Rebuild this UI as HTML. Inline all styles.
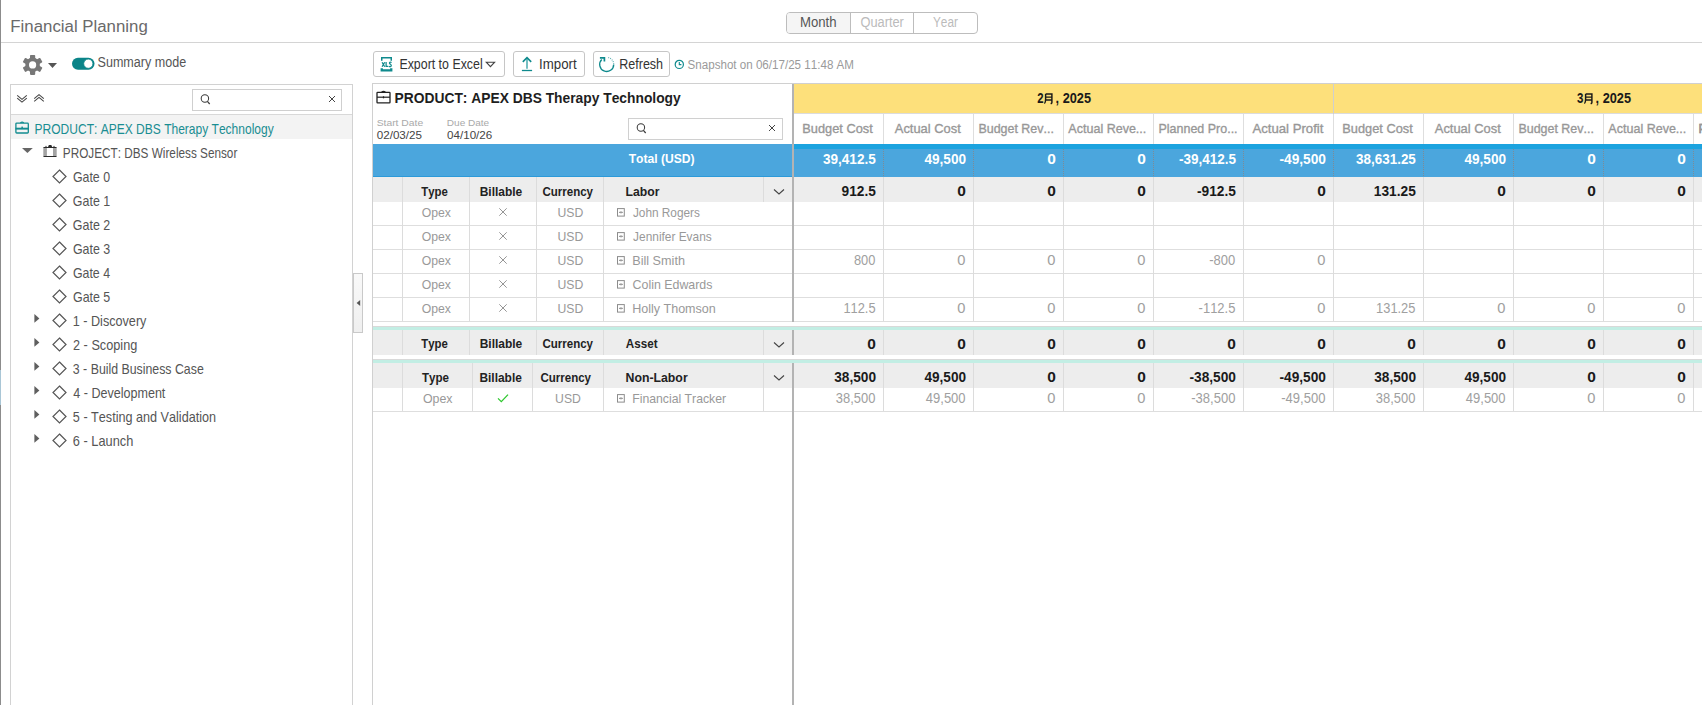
<!DOCTYPE html><html><head><meta charset="utf-8"><style>
*{box-sizing:border-box;margin:0;padding:0}
html,body{width:1702px;height:705px;overflow:hidden;background:#fff}
body{position:relative;font-family:"Liberation Sans",sans-serif;font-kerning:none}
.a{position:absolute}
.t{position:absolute;white-space:nowrap;line-height:20px;height:20px;transform-origin:0 50%}
</style></head><body>

<div class="a" style="left:0px;top:0px;width:1px;height:705px;background:#8c8c8c"></div>
<div class="a" style="left:0px;top:370px;width:1px;height:35px;background:#a9c6d6"></div>
<div class="t" style="left:10px;top:16px;font-size:16px;color:#6a6a6a;transform:translate(0.329px,0.884px) scaleX(1.0512);">Financial Planning</div>
<div class="a" style="left:1px;top:42px;width:1701px;height:1px;background:#d4d4d4"></div>
<div class="a" style="left:786px;top:12px;width:192px;height:22px;border:1px solid #bdbdbd;border-radius:4px;background:#fff"></div>
<div class="a" style="left:787px;top:13px;width:63px;height:20px;background:#f5f5f5;border-radius:3px 0 0 3px"></div>
<div class="a" style="left:850px;top:13px;width:1px;height:20px;background:#bdbdbd"></div>
<div class="a" style="left:913px;top:13px;width:1px;height:20px;background:#bdbdbd"></div>
<div class="t" style="left:800px;top:12px;font-size:14px;color:#555;transform:translate(0.016px,0.361px) scaleX(0.9402);">Month</div>
<div class="t" style="left:860px;top:12px;font-size:14px;color:#bbb;transform:translate(0.418px,0.361px) scaleX(0.9148);">Quarter</div>
<div class="t" style="left:932px;top:12px;font-size:14px;color:#bbb;transform:translate(0.942px,0.361px) scaleX(0.8431);">Year</div>
<svg class="a" style="left:22px;top:54px" width="22" height="22" viewBox="0 0 22 22"><g transform="translate(10.6,10.9)" fill="#777"><rect x="-2.6" y="-10" width="5.2" height="5" rx="0.8" transform="rotate(0)"/><rect x="-2.6" y="-10" width="5.2" height="5" rx="0.8" transform="rotate(60)"/><rect x="-2.6" y="-10" width="5.2" height="5" rx="0.8" transform="rotate(120)"/><rect x="-2.6" y="-10" width="5.2" height="5" rx="0.8" transform="rotate(180)"/><rect x="-2.6" y="-10" width="5.2" height="5" rx="0.8" transform="rotate(240)"/><rect x="-2.6" y="-10" width="5.2" height="5" rx="0.8" transform="rotate(300)"/><circle r="7.3"/></g><circle cx="10.6" cy="10.9" r="3.6" fill="#fff"/></svg>
<svg class="a" style="left:47px;top:62px" width="11" height="7" viewBox="0 0 11 7"><path d="M1 1 L10 1 L5.5 6 Z" fill="#555"/></svg>
<svg class="a" style="left:71px;top:57px" width="25" height="14" viewBox="0 0 25 14"><rect x="1" y="0.7" width="22.5" height="12" rx="6" fill="#0a8488"/><circle cx="17.3" cy="6.7" r="4.6" fill="#fff" stroke="#0a8488" stroke-width="0.8"/></svg>
<div class="t" style="left:97px;top:52px;font-size:14px;color:#555;transform:translate(0.519px,0.461px) scaleX(0.8972);">Summary mode</div>
<div class="a" style="left:10px;top:84px;width:343px;height:640px;border:1px solid #d2d2d2;background:#fff"></div>
<div class="a" style="left:11px;top:114px;width:341px;height:1px;background:#d8d8d8"></div>
<svg class="a" style="left:15px;top:92px" width="14" height="12" viewBox="0 0 14 12"><path d="M2.2 3.3 L7 7.4 L11.8 3.3 M2.2 6.1 L7 10.1 L11.8 6.1" fill="none" stroke="#444" stroke-width="1.05"/></svg>
<svg class="a" style="left:32px;top:92px" width="14" height="12" viewBox="0 0 14 12"><path d="M2.2 6.6 L7 2.6 L11.8 6.6 M2.2 9.4 L7 5.4 L11.8 9.4" fill="none" stroke="#444" stroke-width="1.05"/></svg>
<div class="a" style="left:192px;top:89px;width:150px;height:22px;border:1px solid #cfcfcf;background:#fff"></div>
<svg class="a" style="left:199px;top:93px" width="14" height="14" viewBox="0 0 14 14"><circle cx="5.9" cy="5.5" r="3.7" fill="none" stroke="#3a3a3a" stroke-width="1.05"/><path d="M8.4 8.3 L10.7 11" stroke="#3a3a3a" stroke-width="1.2"/></svg>
<svg class="a" style="left:327px;top:94px" width="10" height="10" viewBox="0 0 10 10"><path d="M2 2 L8 8 M8 2 L2 8" stroke="#3a3a3a" stroke-width="0.95"/></svg>
<div class="a" style="left:11px;top:115px;width:341px;height:24px;background:#f3f3f3"></div>
<svg class="a" style="left:14px;top:121px" width="16" height="13" viewBox="0 0 16 13"><rect x="1.9" y="2.1" width="12.4" height="9.9" rx="0.8" fill="none" stroke="#138c90" stroke-width="1.3"/><rect x="1.5" y="6.7" width="13.2" height="1.9" fill="#138c90"/><path d="M6.4 1.9 Q8.1 0.3 9.8 1.9" stroke="#138c90" stroke-width="1.3" fill="none"/><rect x="7.4" y="5.6" width="1.5" height="1.4" fill="#138c90"/></svg>
<div class="t" style="left:34px;top:118px;font-size:14.5px;color:#1a8d92;transform:translate(0.558px,0.967px) scaleX(0.8290);">PRODUCT: APEX DBS Therapy Technology</div>
<svg class="a" style="left:21px;top:147px" width="13" height="7" viewBox="0 0 13 7"><path d="M1 1 L11.8 1 L6.4 6 Z" fill="#666"/></svg>
<svg class="a" style="left:42px;top:144px" width="16" height="14" viewBox="0 0 16 14"><rect x="1.3" y="3.4" width="3.6" height="8.9" fill="#a3a3a3"/><rect x="11" y="3.4" width="3.7" height="8.9" fill="#a3a3a3"/><rect x="1.4" y="2.9" width="13.2" height="1.1" rx="0.5" fill="#2a2a2a"/><rect x="1.4" y="11.9" width="13.2" height="1.1" rx="0.5" fill="#2a2a2a"/><path d="M6 3 L6.9 1.1 H9.3 L10.2 3 Z" fill="#2a2a2a"/><rect x="3.1" y="1.9" width="1.8" height="1.1" fill="#8a8a8a"/><rect x="11.1" y="1.9" width="1.8" height="1.1" fill="#8a8a8a"/></svg>
<div class="t" style="left:62px;top:142px;font-size:14.5px;color:#555;transform:translate(0.867px,0.967px) scaleX(0.8109);">PROJECT: DBS Wireless Sensor</div>
<svg class="a" style="left:52px;top:169px" width="16" height="15" viewBox="0 0 16 15"><path d="M7.5 1 L14 7.5 L7.5 14 L1 7.5 Z" fill="none" stroke="#555" stroke-width="1.2"/></svg>
<div class="t" style="left:72px;top:166px;font-size:14.5px;color:#555;transform:translate(0.919px,0.867px) scaleX(0.8529);">Gate 0</div>
<svg class="a" style="left:52px;top:193px" width="16" height="15" viewBox="0 0 16 15"><path d="M7.5 1 L14 7.5 L7.5 14 L1 7.5 Z" fill="none" stroke="#555" stroke-width="1.2"/></svg>
<div class="t" style="left:72px;top:190px;font-size:14.5px;color:#555;transform:translate(0.857px,0.867px) scaleX(0.8567);">Gate 1</div>
<svg class="a" style="left:52px;top:217px" width="16" height="15" viewBox="0 0 16 15"><path d="M7.5 1 L14 7.5 L7.5 14 L1 7.5 Z" fill="none" stroke="#555" stroke-width="1.2"/></svg>
<div class="t" style="left:72px;top:214px;font-size:14.5px;color:#555;transform:translate(0.861px,0.867px) scaleX(0.8597);">Gate 2</div>
<svg class="a" style="left:52px;top:241px" width="16" height="15" viewBox="0 0 16 15"><path d="M7.5 1 L14 7.5 L7.5 14 L1 7.5 Z" fill="none" stroke="#555" stroke-width="1.2"/></svg>
<div class="t" style="left:72px;top:238px;font-size:14.5px;color:#555;transform:translate(0.878px,0.867px) scaleX(0.8569);">Gate 3</div>
<svg class="a" style="left:52px;top:265px" width="16" height="15" viewBox="0 0 16 15"><path d="M7.5 1 L14 7.5 L7.5 14 L1 7.5 Z" fill="none" stroke="#555" stroke-width="1.2"/></svg>
<div class="t" style="left:72px;top:262px;font-size:14.5px;color:#555;transform:translate(0.913px,0.867px) scaleX(0.8527);">Gate 4</div>
<svg class="a" style="left:52px;top:289px" width="16" height="15" viewBox="0 0 16 15"><path d="M7.5 1 L14 7.5 L7.5 14 L1 7.5 Z" fill="none" stroke="#555" stroke-width="1.2"/></svg>
<div class="t" style="left:73px;top:286px;font-size:14.5px;color:#555;transform:translate(0.011px,0.867px) scaleX(0.8560);">Gate 5</div>
<svg class="a" style="left:52px;top:313px" width="16" height="15" viewBox="0 0 16 15"><path d="M7.5 1 L14 7.5 L7.5 14 L1 7.5 Z" fill="none" stroke="#555" stroke-width="1.2"/></svg>
<div class="t" style="left:72px;top:310px;font-size:14.5px;color:#555;transform:translate(0.695px,0.867px) scaleX(0.8714);">1 - Discovery</div>
<svg class="a" style="left:33px;top:313px" width="8" height="12" viewBox="0 0 8 12"><path d="M1.4 1 L6.4 5.4 L1.4 9.8 Z" fill="#5f5f5f"/></svg>
<svg class="a" style="left:52px;top:337px" width="16" height="15" viewBox="0 0 16 15"><path d="M7.5 1 L14 7.5 L7.5 14 L1 7.5 Z" fill="none" stroke="#555" stroke-width="1.2"/></svg>
<div class="t" style="left:73px;top:334px;font-size:14.5px;color:#555;transform:translate(0.029px,0.867px) scaleX(0.8760);">2 - Scoping</div>
<svg class="a" style="left:33px;top:337px" width="8" height="12" viewBox="0 0 8 12"><path d="M1.4 1 L6.4 5.4 L1.4 9.8 Z" fill="#5f5f5f"/></svg>
<svg class="a" style="left:52px;top:361px" width="16" height="15" viewBox="0 0 16 15"><path d="M7.5 1 L14 7.5 L7.5 14 L1 7.5 Z" fill="none" stroke="#555" stroke-width="1.2"/></svg>
<div class="t" style="left:72px;top:358px;font-size:14.5px;color:#555;transform:translate(0.842px,0.867px) scaleX(0.8503);">3 - Build Business Case</div>
<svg class="a" style="left:33px;top:361px" width="8" height="12" viewBox="0 0 8 12"><path d="M1.4 1 L6.4 5.4 L1.4 9.8 Z" fill="#5f5f5f"/></svg>
<svg class="a" style="left:52px;top:385px" width="16" height="15" viewBox="0 0 16 15"><path d="M7.5 1 L14 7.5 L7.5 14 L1 7.5 Z" fill="none" stroke="#555" stroke-width="1.2"/></svg>
<div class="t" style="left:73px;top:382px;font-size:14.5px;color:#555;transform:translate(0.268px,0.867px) scaleX(0.8656);">4 - Development</div>
<svg class="a" style="left:33px;top:385px" width="8" height="12" viewBox="0 0 8 12"><path d="M1.4 1 L6.4 5.4 L1.4 9.8 Z" fill="#5f5f5f"/></svg>
<svg class="a" style="left:52px;top:409px" width="16" height="15" viewBox="0 0 16 15"><path d="M7.5 1 L14 7.5 L7.5 14 L1 7.5 Z" fill="none" stroke="#555" stroke-width="1.2"/></svg>
<div class="t" style="left:72px;top:406px;font-size:14.5px;color:#555;transform:translate(0.853px,0.867px) scaleX(0.8708);">5 - Testing and Validation</div>
<svg class="a" style="left:33px;top:409px" width="8" height="12" viewBox="0 0 8 12"><path d="M1.4 1 L6.4 5.4 L1.4 9.8 Z" fill="#5f5f5f"/></svg>
<svg class="a" style="left:52px;top:433px" width="16" height="15" viewBox="0 0 16 15"><path d="M7.5 1 L14 7.5 L7.5 14 L1 7.5 Z" fill="none" stroke="#555" stroke-width="1.2"/></svg>
<div class="t" style="left:72px;top:430px;font-size:14.5px;color:#555;transform:translate(0.868px,0.867px) scaleX(0.8822);">6 - Launch</div>
<svg class="a" style="left:33px;top:433px" width="8" height="12" viewBox="0 0 8 12"><path d="M1.4 1 L6.4 5.4 L1.4 9.8 Z" fill="#5f5f5f"/></svg>
<div class="a" style="left:353px;top:273px;width:10px;height:60px;border:1px solid #c9c9c9;background:linear-gradient(#f9f9f9,#efefef)"></div>
<svg class="a" style="left:355px;top:299px" width="7" height="9" viewBox="0 0 7 9"><path d="M5.2 1 L1.6 4 L5.2 7 Z" fill="#555"/></svg>
<div class="a" style="left:373px;top:51px;width:132px;height:26px;border:1px solid #c6c6c6;border-radius:3px;background:#fff"></div>
<div class="a" style="left:513px;top:51px;width:72px;height:26px;border:1px solid #c6c6c6;border-radius:3px;background:#fff"></div>
<div class="a" style="left:593px;top:51px;width:77px;height:26px;border:1px solid #c6c6c6;border-radius:3px;background:#fff"></div>
<svg class="a" style="left:380px;top:56px" width="14" height="17" viewBox="0 0 14 17"><path d="M1.75 4.7 V1.85 H11.25 V4.7" fill="none" stroke="#0f8a8d" stroke-width="1.5"/><path d="M1.75 12.2 V14.45 H11.25 V12.2" fill="none" stroke="#0f8a8d" stroke-width="2.3"/><path d="M2.1 6.2 L4.7 10.7 M4.7 6.2 L2.1 10.7 M6.1 6 V10.4 H8.3 M11.5 6.7 Q10.8 5.9 9.9 6.3 Q9.1 6.9 9.8 7.8 L10.9 8.6 Q11.7 9.6 10.9 10.4 Q9.9 11 9 10.3" fill="none" stroke="#0f8a8d" stroke-width="1.25"/></svg>
<div class="t" style="left:399px;top:54px;font-size:14px;color:#333;transform:translate(0.423px,0.161px) scaleX(0.8838);">Export to Excel</div>
<svg class="a" style="left:485px;top:61px" width="11" height="7" viewBox="0 0 11 7"><path d="M1.3 1.2 L9.6 1.2 L5.45 5.6 Z" fill="none" stroke="#444" stroke-width="1.1"/></svg>
<svg class="a" style="left:520px;top:56px" width="14" height="16" viewBox="0 0 14 16"><path d="M7 2.2 V12.7" stroke="#6dbcbf" stroke-width="1.9"/><path d="M2.8 5.9 L7 1.6 L11.2 5.9" fill="none" stroke="#0f8a8d" stroke-width="1.6"/><path d="M1.9 14.5 H12.1" stroke="#0f8a8d" stroke-width="1.3"/></svg>
<div class="t" style="left:539px;top:54px;font-size:14px;color:#333;transform:translate(0.120px,0.161px) scaleX(0.9477);">Import</div>
<svg class="a" style="left:597px;top:55px" width="20" height="19" viewBox="0 0 20 19"><path d="M4.75 4.45 A7 7 0 1 0 16.7 9.4" fill="none" stroke="#0f8a8d" stroke-width="1.35"/><path d="M16.7 9.1 A7 7 0 0 0 10.3 2.4" fill="none" stroke="#0f8a8d" stroke-width="1.2" stroke-dasharray="0.9 1.1" opacity="0.7"/><path d="M2.9 2.9 H7.4 V6.6" fill="none" stroke="#0f8a8d" stroke-width="1.7"/></svg>
<div class="t" style="left:619px;top:54px;font-size:14px;color:#333;transform:translate(0.224px,0.161px) scaleX(0.8948);">Refresh</div>
<svg class="a" style="left:673px;top:59px" width="12" height="11" viewBox="0 0 12 11"><circle cx="6.3" cy="5.4" r="4.1" fill="none" stroke="#0f8a8d" stroke-width="1.2"/><path d="M6.3 3.1 V5.6 H8.4" fill="none" stroke="#0f8a8d" stroke-width="1.1"/></svg>
<div class="t" style="left:687px;top:55px;font-size:12px;color:#9a9a9a;transform:translate(0.537px,0.138px) scaleX(0.9668);">Snapshot on 06/17/25 11:48 AM</div>
<div class="a" style="left:372px;top:83px;width:1330px;height:640px;border-top:1px solid #d0d0d0;border-left:1px solid #d0d0d0;background:#fff"></div>
<svg class="a" style="left:375px;top:90px" width="17" height="14" viewBox="0 0 17 14"><rect x="2" y="2.4" width="13" height="10.4" rx="0.6" fill="none" stroke="#222" stroke-width="1.3"/><path d="M2 7.2 H15" stroke="#222" stroke-width="1.2"/><path d="M6.6 2.2 Q8.5 0.4 10.4 2.2" fill="none" stroke="#222" stroke-width="1.2"/><rect x="7.9" y="6.3" width="1.2" height="2" fill="#222"/></svg>
<div class="t" style="left:394px;top:88px;font-size:14px;font-weight:bold;color:#1e1e1e;transform:translate(0.551px,0.361px) scaleX(0.9862);">PRODUCT: APEX DBS Therapy Technology</div>
<div class="t" style="left:376px;top:112px;font-size:9px;color:#aaa;transform:translate(0.691px,0.603px) scaleX(1.1471);">Start Date</div>
<div class="t" style="left:446px;top:112px;font-size:9px;color:#aaa;transform:translate(0.806px,0.603px) scaleX(1.1148);">Due Date</div>
<div class="t" style="left:376px;top:125px;font-size:11px;color:#444;transform:translate(0.709px,0.126px) scaleX(1.0574);">02/03/25</div>
<div class="t" style="left:447px;top:125px;font-size:11px;color:#444;transform:translate(0.045px,0.126px) scaleX(1.0548);">04/10/26</div>
<div class="a" style="left:628px;top:118px;width:155px;height:22px;border:1px solid #d0d0d0;background:#fff"></div>
<svg class="a" style="left:635px;top:122px" width="14" height="14" viewBox="0 0 14 14"><circle cx="5.9" cy="5.5" r="3.7" fill="none" stroke="#3a3a3a" stroke-width="1.05"/><path d="M8.4 8.3 L10.7 11" stroke="#3a3a3a" stroke-width="1.2"/></svg>
<svg class="a" style="left:767px;top:123px" width="10" height="10" viewBox="0 0 10 10"><path d="M2 2 L8 8 M8 2 L2 8" stroke="#3a3a3a" stroke-width="0.95"/></svg>
<div class="a" style="left:794px;top:84px;width:908px;height:29px;background:#fde07b"></div>
<div class="a" style="left:794px;top:113px;width:908px;height:1px;background:#dcdcdc"></div>
<div class="a" style="left:1333px;top:84px;width:1px;height:60px;background:#cfcfcf"></div>
<div class="t" style="left:1037px;top:88px;font-size:14px;font-weight:bold;color:#1a1a1a;transform:translate(0.180px,0.161px) scaleX(0.8106);">2</div>
<svg class="a" style="left:1044px;top:93px" width="10" height="12" viewBox="0 0 10 12"><path d="M1.6 1 V6.2 Q1.6 9.4 0.4 10.6 M1.6 1 H7.9 V9.6 Q7.9 10.6 6.6 10.4 M1.6 4.1 H7.9 M1.6 6.9 H7.9" fill="none" stroke="#1a1a1a" stroke-width="1.45"/></svg>
<div class="t" style="left:1055px;top:88px;font-size:14px;font-weight:bold;color:#1a1a1a;transform:translate(0.614px,0.161px) scaleX(0.9088);">, 2025</div>
<div class="t" style="left:1577px;top:88px;font-size:14px;font-weight:bold;color:#1a1a1a;transform:translate(0.088px,0.161px) scaleX(0.8223);">3</div>
<svg class="a" style="left:1584px;top:93px" width="10" height="12" viewBox="0 0 10 12"><path d="M1.6 1 V6.2 Q1.6 9.4 0.4 10.6 M1.6 1 H7.9 V9.6 Q7.9 10.6 6.6 10.4 M1.6 4.1 H7.9 M1.6 6.9 H7.9" fill="none" stroke="#1a1a1a" stroke-width="1.45"/></svg>
<div class="t" style="left:1595px;top:88px;font-size:14px;font-weight:bold;color:#1a1a1a;transform:translate(0.614px,0.161px) scaleX(0.9088);">, 2025</div>
<div class="a" style="left:883px;top:114px;width:1px;height:30px;background:#dedede"></div>
<div class="a" style="left:973px;top:114px;width:1px;height:30px;background:#dedede"></div>
<div class="a" style="left:1063px;top:114px;width:1px;height:30px;background:#dedede"></div>
<div class="a" style="left:1153px;top:114px;width:1px;height:30px;background:#dedede"></div>
<div class="a" style="left:1243px;top:114px;width:1px;height:30px;background:#dedede"></div>
<div class="a" style="left:1333px;top:114px;width:1px;height:30px;background:#dedede"></div>
<div class="a" style="left:1423px;top:114px;width:1px;height:30px;background:#dedede"></div>
<div class="a" style="left:1513px;top:114px;width:1px;height:30px;background:#dedede"></div>
<div class="a" style="left:1603px;top:114px;width:1px;height:30px;background:#dedede"></div>
<div class="a" style="left:1693px;top:114px;width:1px;height:30px;background:#dedede"></div>
<div class="t" style="left:802px;top:119px;font-size:13.5px;color:#979797;transform:translate(0.319px,0.255px) scaleX(0.9475);-webkit-text-stroke:0.35px #979797;">Budget Cost</div>
<div class="t" style="left:894px;top:119px;font-size:13.5px;color:#979797;transform:translate(0.832px,0.255px) scaleX(0.9543);-webkit-text-stroke:0.35px #979797;">Actual Cost</div>
<div class="t" style="left:978px;top:119px;font-size:13.5px;color:#979797;transform:translate(0.412px,0.255px) scaleX(0.9223);-webkit-text-stroke:0.35px #979797;">Budget Rev...</div>
<div class="t" style="left:1068px;top:119px;font-size:13.5px;color:#979797;transform:translate(0.367px,0.255px) scaleX(0.9272);-webkit-text-stroke:0.35px #979797;">Actual Reve...</div>
<div class="t" style="left:1158px;top:119px;font-size:13.5px;color:#979797;transform:translate(0.528px,0.255px) scaleX(0.9239);-webkit-text-stroke:0.35px #979797;">Planned Pro...</div>
<div class="t" style="left:1252px;top:119px;font-size:13.5px;color:#979797;transform:translate(0.412px,0.255px) scaleX(0.9753);-webkit-text-stroke:0.35px #979797;">Actual Profit</div>
<div class="t" style="left:1342px;top:119px;font-size:13.5px;color:#979797;transform:translate(0.319px,0.255px) scaleX(0.9475);-webkit-text-stroke:0.35px #979797;">Budget Cost</div>
<div class="t" style="left:1434px;top:119px;font-size:13.5px;color:#979797;transform:translate(0.832px,0.255px) scaleX(0.9543);-webkit-text-stroke:0.35px #979797;">Actual Cost</div>
<div class="t" style="left:1518px;top:119px;font-size:13.5px;color:#979797;transform:translate(0.412px,0.255px) scaleX(0.9223);-webkit-text-stroke:0.35px #979797;">Budget Rev...</div>
<div class="t" style="left:1608px;top:119px;font-size:13.5px;color:#979797;transform:translate(0.367px,0.255px) scaleX(0.9272);-webkit-text-stroke:0.35px #979797;">Actual Reve...</div>
<div class="t" style="left:1698px;top:119px;font-size:13.5px;color:#979797;transform:translate(0.528px,0.255px) scaleX(0.9239);-webkit-text-stroke:0.35px #979797;">Planned Pro...</div>
<div class="t" style="left:1698px;top:119px;font-size:13.5px;color:#979797;transform:translate(0.528px,0.255px) scaleX(0.9239);-webkit-text-stroke:0.35px #979797;">Planned Pro...</div>
<div class="a" style="left:1693px;top:114px;width:1px;height:30px;background:#dedede"></div>
<div class="a" style="left:373px;top:144px;width:419px;height:33px;background:#4ba6dd"></div>
<div class="a" style="left:373px;top:176px;width:419px;height:1px;background:#2c9ad9"></div>
<div class="a" style="left:794px;top:144px;width:908px;height:33px;background:#4ba6dd"></div>
<div class="a" style="left:794px;top:144px;width:908px;height:5px;background:#1ca3df"></div>
<div class="a" style="left:883px;top:149px;width:1px;height:28px;background:repeating-linear-gradient(#808a92 0 1px,transparent 1px 2px)"></div>
<div class="a" style="left:973px;top:149px;width:1px;height:28px;background:repeating-linear-gradient(#808a92 0 1px,transparent 1px 2px)"></div>
<div class="a" style="left:1063px;top:149px;width:1px;height:28px;background:repeating-linear-gradient(#808a92 0 1px,transparent 1px 2px)"></div>
<div class="a" style="left:1153px;top:149px;width:1px;height:28px;background:repeating-linear-gradient(#808a92 0 1px,transparent 1px 2px)"></div>
<div class="a" style="left:1243px;top:149px;width:1px;height:28px;background:repeating-linear-gradient(#808a92 0 1px,transparent 1px 2px)"></div>
<div class="a" style="left:1333px;top:149px;width:1px;height:28px;background:repeating-linear-gradient(#808a92 0 1px,transparent 1px 2px)"></div>
<div class="a" style="left:1423px;top:149px;width:1px;height:28px;background:repeating-linear-gradient(#808a92 0 1px,transparent 1px 2px)"></div>
<div class="a" style="left:1513px;top:149px;width:1px;height:28px;background:repeating-linear-gradient(#808a92 0 1px,transparent 1px 2px)"></div>
<div class="a" style="left:1603px;top:149px;width:1px;height:28px;background:repeating-linear-gradient(#808a92 0 1px,transparent 1px 2px)"></div>
<div class="a" style="left:1693px;top:149px;width:1px;height:28px;background:repeating-linear-gradient(#808a92 0 1px,transparent 1px 2px)"></div>
<div class="t" style="left:628px;top:148px;font-size:13px;font-weight:bold;color:#fff;transform:translate(0.708px,0.549px) scaleX(0.9312);">Total (USD)</div>
<div class="t" style="left:822px;top:149px;font-size:14px;font-weight:bold;color:#fff;transform:translate(0.913px,0.161px) scaleX(0.9702);">39,412.5</div>
<div class="t" style="left:924px;top:149px;font-size:14px;font-weight:bold;color:#fff;transform:translate(0.474px,0.161px) scaleX(0.9704);">49,500</div>
<div class="t" style="left:1047px;top:149px;font-size:14px;font-weight:bold;color:#fff;transform:translate(0.346px,0.161px) scaleX(1.1052);">0</div>
<div class="t" style="left:1137px;top:149px;font-size:14px;font-weight:bold;color:#fff;transform:translate(0.346px,0.161px) scaleX(1.1052);">0</div>
<div class="t" style="left:1178px;top:149px;font-size:14px;font-weight:bold;color:#fff;transform:translate(0.887px,0.161px) scaleX(0.9634);">-39,412.5</div>
<div class="t" style="left:1279px;top:149px;font-size:14px;font-weight:bold;color:#fff;transform:translate(0.446px,0.161px) scaleX(0.9803);">-49,500</div>
<div class="t" style="left:1356px;top:149px;font-size:14px;font-weight:bold;color:#fff;transform:translate(0.042px,0.161px) scaleX(0.9602);">38,631.25</div>
<div class="t" style="left:1464px;top:149px;font-size:14px;font-weight:bold;color:#fff;transform:translate(0.474px,0.161px) scaleX(0.9704);">49,500</div>
<div class="t" style="left:1587px;top:149px;font-size:14px;font-weight:bold;color:#fff;transform:translate(0.346px,0.161px) scaleX(1.1052);">0</div>
<div class="t" style="left:1677px;top:149px;font-size:14px;font-weight:bold;color:#fff;transform:translate(0.346px,0.161px) scaleX(1.1052);">0</div>
<div class="a" style="left:792px;top:84px;width:2px;height:238px;background:#b3b3b3"></div>
<div class="a" style="left:792px;top:330px;width:2px;height:25px;background:#b3b3b3"></div>
<div class="a" style="left:792px;top:363px;width:2px;height:342px;background:#b3b3b3"></div>
<div class="a" style="left:373px;top:177px;width:419px;height:24.5px;background:#ededed"></div>
<div class="a" style="left:794px;top:177px;width:908px;height:24.5px;background:#ededed"></div>
<div class="a" style="left:402px;top:177px;width:1px;height:24.5px;background:#dcdcdc"></div>
<div class="a" style="left:469px;top:177px;width:1px;height:24.5px;background:#dcdcdc"></div>
<div class="a" style="left:536px;top:177px;width:1px;height:24.5px;background:#dcdcdc"></div>
<div class="a" style="left:603px;top:177px;width:1px;height:24.5px;background:#dcdcdc"></div>
<div class="a" style="left:763px;top:177px;width:1px;height:24.5px;background:#dcdcdc"></div>
<div class="a" style="left:883px;top:177px;width:1px;height:24.5px;background:#dcdcdc"></div>
<div class="a" style="left:973px;top:177px;width:1px;height:24.5px;background:#dcdcdc"></div>
<div class="a" style="left:1063px;top:177px;width:1px;height:24.5px;background:#dcdcdc"></div>
<div class="a" style="left:1153px;top:177px;width:1px;height:24.5px;background:#dcdcdc"></div>
<div class="a" style="left:1243px;top:177px;width:1px;height:24.5px;background:#dcdcdc"></div>
<div class="a" style="left:1333px;top:177px;width:1px;height:24.5px;background:#dcdcdc"></div>
<div class="a" style="left:1423px;top:177px;width:1px;height:24.5px;background:#dcdcdc"></div>
<div class="a" style="left:1513px;top:177px;width:1px;height:24.5px;background:#dcdcdc"></div>
<div class="a" style="left:1603px;top:177px;width:1px;height:24.5px;background:#dcdcdc"></div>
<div class="a" style="left:1693px;top:177px;width:1px;height:24.5px;background:#dcdcdc"></div>
<div class="t" style="left:421px;top:181px;font-size:13px;font-weight:bold;color:#222;transform:translate(0.191px,0.749px) scaleX(0.8752);">Type</div>
<div class="t" style="left:479px;top:181px;font-size:13px;font-weight:bold;color:#222;transform:translate(0.646px,0.749px) scaleX(0.9219);">Billable</div>
<div class="t" style="left:542px;top:181px;font-size:13px;font-weight:bold;color:#222;transform:translate(0.415px,0.749px) scaleX(0.8868);">Currency</div>
<div class="t" style="left:625px;top:181px;font-size:13px;font-weight:bold;color:#222;transform:translate(0.520px,0.749px) scaleX(0.9390);">Labor</div>
<svg class="a" style="left:772px;top:188.1px" width="14" height="8" viewBox="0 0 14 8"><path d="M2 1.5 L7 6 L12 1.5" fill="none" stroke="#444" stroke-width="1.1"/></svg>
<div class="t" style="left:841px;top:181px;font-size:14px;font-weight:bold;color:#1a1a1a;transform:translate(0.581px,0.261px) scaleX(0.9789);">912.5</div>
<div class="t" style="left:957px;top:181px;font-size:14px;font-weight:bold;color:#1a1a1a;transform:translate(0.346px,0.261px) scaleX(1.1052);">0</div>
<div class="t" style="left:1047px;top:181px;font-size:14px;font-weight:bold;color:#1a1a1a;transform:translate(0.346px,0.261px) scaleX(1.1052);">0</div>
<div class="t" style="left:1137px;top:181px;font-size:14px;font-weight:bold;color:#1a1a1a;transform:translate(0.346px,0.261px) scaleX(1.1052);">0</div>
<div class="t" style="left:1197px;top:181px;font-size:14px;font-weight:bold;color:#1a1a1a;transform:translate(0.002px,0.261px) scaleX(0.9805);">-912.5</div>
<div class="t" style="left:1317px;top:181px;font-size:14px;font-weight:bold;color:#1a1a1a;transform:translate(0.346px,0.261px) scaleX(1.1052);">0</div>
<div class="t" style="left:1373px;top:181px;font-size:14px;font-weight:bold;color:#1a1a1a;transform:translate(0.767px,0.261px) scaleX(0.9819);">131.25</div>
<div class="t" style="left:1497px;top:181px;font-size:14px;font-weight:bold;color:#1a1a1a;transform:translate(0.346px,0.261px) scaleX(1.1052);">0</div>
<div class="t" style="left:1587px;top:181px;font-size:14px;font-weight:bold;color:#1a1a1a;transform:translate(0.346px,0.261px) scaleX(1.1052);">0</div>
<div class="t" style="left:1677px;top:181px;font-size:14px;font-weight:bold;color:#1a1a1a;transform:translate(0.346px,0.261px) scaleX(1.1052);">0</div>
<div class="a" style="left:402px;top:201px;width:1px;height:24px;background:#dcdcdc"></div>
<div class="a" style="left:469px;top:201px;width:1px;height:24px;background:#dcdcdc"></div>
<div class="a" style="left:536px;top:201px;width:1px;height:24px;background:#dcdcdc"></div>
<div class="a" style="left:603px;top:201px;width:1px;height:24px;background:#dcdcdc"></div>
<div class="a" style="left:883px;top:201px;width:1px;height:24px;background:#dcdcdc"></div>
<div class="a" style="left:973px;top:201px;width:1px;height:24px;background:#dcdcdc"></div>
<div class="a" style="left:1063px;top:201px;width:1px;height:24px;background:#dcdcdc"></div>
<div class="a" style="left:1153px;top:201px;width:1px;height:24px;background:#dcdcdc"></div>
<div class="a" style="left:1243px;top:201px;width:1px;height:24px;background:#dcdcdc"></div>
<div class="a" style="left:1333px;top:201px;width:1px;height:24px;background:#dcdcdc"></div>
<div class="a" style="left:1423px;top:201px;width:1px;height:24px;background:#dcdcdc"></div>
<div class="a" style="left:1513px;top:201px;width:1px;height:24px;background:#dcdcdc"></div>
<div class="a" style="left:1603px;top:201px;width:1px;height:24px;background:#dcdcdc"></div>
<div class="a" style="left:1693px;top:201px;width:1px;height:24px;background:#dcdcdc"></div>
<div class="a" style="left:373px;top:225px;width:419px;height:1px;background:#dedede"></div>
<div class="a" style="left:794px;top:225px;width:908px;height:1px;background:#dedede"></div>
<div class="t" style="left:421px;top:202px;font-size:13px;color:#999;transform:translate(0.728px,0.749px) scaleX(0.9403);">Opex</div>
<svg class="a" style="left:498px;top:207.1px" width="11" height="10" viewBox="0 0 11 10"><path d="M1.3 1.3 L8.7 8.7 M8.7 1.3 L1.3 8.7" stroke="#8a8a8a" stroke-width="0.9"/></svg>
<div class="t" style="left:557px;top:202px;font-size:13px;color:#999;transform:translate(0.460px,0.749px) scaleX(0.9392);">USD</div>
<svg class="a" style="left:616px;top:207.1px" width="10" height="10" viewBox="0 0 10 10"><rect x="1.5" y="1.6" width="6.8" height="7.5" fill="none" stroke="#8c8c8c" stroke-width="1"/><path d="M3 5.35 H6.9" stroke="#8c8c8c" stroke-width="1"/><path d="M4.1 4.4 L5.1 5.35 L4.1 6.3 M5.7 4.4 L4.7 5.35 L5.7 6.3" fill="none" stroke="#9a9a9a" stroke-width="0.6"/></svg>
<div class="t" style="left:632px;top:202px;font-size:13px;color:#999;transform:translate(0.941px,0.749px) scaleX(0.9088);">John Rogers</div>
<div class="a" style="left:402px;top:225px;width:1px;height:24px;background:#dcdcdc"></div>
<div class="a" style="left:469px;top:225px;width:1px;height:24px;background:#dcdcdc"></div>
<div class="a" style="left:536px;top:225px;width:1px;height:24px;background:#dcdcdc"></div>
<div class="a" style="left:603px;top:225px;width:1px;height:24px;background:#dcdcdc"></div>
<div class="a" style="left:883px;top:225px;width:1px;height:24px;background:#dcdcdc"></div>
<div class="a" style="left:973px;top:225px;width:1px;height:24px;background:#dcdcdc"></div>
<div class="a" style="left:1063px;top:225px;width:1px;height:24px;background:#dcdcdc"></div>
<div class="a" style="left:1153px;top:225px;width:1px;height:24px;background:#dcdcdc"></div>
<div class="a" style="left:1243px;top:225px;width:1px;height:24px;background:#dcdcdc"></div>
<div class="a" style="left:1333px;top:225px;width:1px;height:24px;background:#dcdcdc"></div>
<div class="a" style="left:1423px;top:225px;width:1px;height:24px;background:#dcdcdc"></div>
<div class="a" style="left:1513px;top:225px;width:1px;height:24px;background:#dcdcdc"></div>
<div class="a" style="left:1603px;top:225px;width:1px;height:24px;background:#dcdcdc"></div>
<div class="a" style="left:1693px;top:225px;width:1px;height:24px;background:#dcdcdc"></div>
<div class="a" style="left:373px;top:249px;width:419px;height:1px;background:#dedede"></div>
<div class="a" style="left:794px;top:249px;width:908px;height:1px;background:#dedede"></div>
<div class="t" style="left:421px;top:226px;font-size:13px;color:#999;transform:translate(0.728px,0.749px) scaleX(0.9403);">Opex</div>
<svg class="a" style="left:498px;top:231.1px" width="11" height="10" viewBox="0 0 11 10"><path d="M1.3 1.3 L8.7 8.7 M8.7 1.3 L1.3 8.7" stroke="#8a8a8a" stroke-width="0.9"/></svg>
<div class="t" style="left:557px;top:226px;font-size:13px;color:#999;transform:translate(0.460px,0.749px) scaleX(0.9392);">USD</div>
<svg class="a" style="left:616px;top:231.1px" width="10" height="10" viewBox="0 0 10 10"><rect x="1.5" y="1.6" width="6.8" height="7.5" fill="none" stroke="#8c8c8c" stroke-width="1"/><path d="M3 5.35 H6.9" stroke="#8c8c8c" stroke-width="1"/><path d="M4.1 4.4 L5.1 5.35 L4.1 6.3 M5.7 4.4 L4.7 5.35 L5.7 6.3" fill="none" stroke="#9a9a9a" stroke-width="0.6"/></svg>
<div class="t" style="left:633px;top:226px;font-size:13px;color:#999;transform:translate(0.121px,0.749px) scaleX(0.9140);">Jennifer Evans</div>
<div class="a" style="left:402px;top:249px;width:1px;height:24px;background:#dcdcdc"></div>
<div class="a" style="left:469px;top:249px;width:1px;height:24px;background:#dcdcdc"></div>
<div class="a" style="left:536px;top:249px;width:1px;height:24px;background:#dcdcdc"></div>
<div class="a" style="left:603px;top:249px;width:1px;height:24px;background:#dcdcdc"></div>
<div class="a" style="left:883px;top:249px;width:1px;height:24px;background:#dcdcdc"></div>
<div class="a" style="left:973px;top:249px;width:1px;height:24px;background:#dcdcdc"></div>
<div class="a" style="left:1063px;top:249px;width:1px;height:24px;background:#dcdcdc"></div>
<div class="a" style="left:1153px;top:249px;width:1px;height:24px;background:#dcdcdc"></div>
<div class="a" style="left:1243px;top:249px;width:1px;height:24px;background:#dcdcdc"></div>
<div class="a" style="left:1333px;top:249px;width:1px;height:24px;background:#dcdcdc"></div>
<div class="a" style="left:1423px;top:249px;width:1px;height:24px;background:#dcdcdc"></div>
<div class="a" style="left:1513px;top:249px;width:1px;height:24px;background:#dcdcdc"></div>
<div class="a" style="left:1603px;top:249px;width:1px;height:24px;background:#dcdcdc"></div>
<div class="a" style="left:1693px;top:249px;width:1px;height:24px;background:#dcdcdc"></div>
<div class="a" style="left:373px;top:273px;width:419px;height:1px;background:#dedede"></div>
<div class="a" style="left:794px;top:273px;width:908px;height:1px;background:#dedede"></div>
<div class="t" style="left:421px;top:250px;font-size:13px;color:#999;transform:translate(0.728px,0.750px) scaleX(0.9403);">Opex</div>
<svg class="a" style="left:498px;top:255.10000000000002px" width="11" height="10" viewBox="0 0 11 10"><path d="M1.3 1.3 L8.7 8.7 M8.7 1.3 L1.3 8.7" stroke="#8a8a8a" stroke-width="0.9"/></svg>
<div class="t" style="left:557px;top:250px;font-size:13px;color:#999;transform:translate(0.460px,0.750px) scaleX(0.9392);">USD</div>
<svg class="a" style="left:616px;top:255.10000000000002px" width="10" height="10" viewBox="0 0 10 10"><rect x="1.5" y="1.6" width="6.8" height="7.5" fill="none" stroke="#8c8c8c" stroke-width="1"/><path d="M3 5.35 H6.9" stroke="#8c8c8c" stroke-width="1"/><path d="M4.1 4.4 L5.1 5.35 L4.1 6.3 M5.7 4.4 L4.7 5.35 L5.7 6.3" fill="none" stroke="#9a9a9a" stroke-width="0.6"/></svg>
<div class="t" style="left:632px;top:250px;font-size:13px;color:#999;transform:translate(0.228px,0.750px) scaleX(0.9731);">Bill Smith</div>
<div class="t" style="left:853px;top:249px;font-size:14px;color:#a0a0a0;transform:translate(0.888px,0.861px) scaleX(0.9180);">800</div>
<div class="t" style="left:957px;top:249px;font-size:14px;color:#a0a0a0;transform:translate(0.329px,0.861px) scaleX(1.0490);">0</div>
<div class="t" style="left:1047px;top:249px;font-size:14px;color:#a0a0a0;transform:translate(0.329px,0.861px) scaleX(1.0490);">0</div>
<div class="t" style="left:1137px;top:249px;font-size:14px;color:#a0a0a0;transform:translate(0.329px,0.861px) scaleX(1.0490);">0</div>
<div class="t" style="left:1209px;top:249px;font-size:14px;color:#a0a0a0;transform:translate(0.265px,0.861px) scaleX(0.9270);">-800</div>
<div class="t" style="left:1317px;top:249px;font-size:14px;color:#a0a0a0;transform:translate(0.329px,0.861px) scaleX(1.0490);">0</div>
<div class="a" style="left:402px;top:273px;width:1px;height:24px;background:#dcdcdc"></div>
<div class="a" style="left:469px;top:273px;width:1px;height:24px;background:#dcdcdc"></div>
<div class="a" style="left:536px;top:273px;width:1px;height:24px;background:#dcdcdc"></div>
<div class="a" style="left:603px;top:273px;width:1px;height:24px;background:#dcdcdc"></div>
<div class="a" style="left:883px;top:273px;width:1px;height:24px;background:#dcdcdc"></div>
<div class="a" style="left:973px;top:273px;width:1px;height:24px;background:#dcdcdc"></div>
<div class="a" style="left:1063px;top:273px;width:1px;height:24px;background:#dcdcdc"></div>
<div class="a" style="left:1153px;top:273px;width:1px;height:24px;background:#dcdcdc"></div>
<div class="a" style="left:1243px;top:273px;width:1px;height:24px;background:#dcdcdc"></div>
<div class="a" style="left:1333px;top:273px;width:1px;height:24px;background:#dcdcdc"></div>
<div class="a" style="left:1423px;top:273px;width:1px;height:24px;background:#dcdcdc"></div>
<div class="a" style="left:1513px;top:273px;width:1px;height:24px;background:#dcdcdc"></div>
<div class="a" style="left:1603px;top:273px;width:1px;height:24px;background:#dcdcdc"></div>
<div class="a" style="left:1693px;top:273px;width:1px;height:24px;background:#dcdcdc"></div>
<div class="a" style="left:373px;top:297px;width:419px;height:1px;background:#dedede"></div>
<div class="a" style="left:794px;top:297px;width:908px;height:1px;background:#dedede"></div>
<div class="t" style="left:421px;top:274px;font-size:13px;color:#999;transform:translate(0.728px,0.750px) scaleX(0.9403);">Opex</div>
<svg class="a" style="left:498px;top:279.1px" width="11" height="10" viewBox="0 0 11 10"><path d="M1.3 1.3 L8.7 8.7 M8.7 1.3 L1.3 8.7" stroke="#8a8a8a" stroke-width="0.9"/></svg>
<div class="t" style="left:557px;top:274px;font-size:13px;color:#999;transform:translate(0.460px,0.750px) scaleX(0.9392);">USD</div>
<svg class="a" style="left:616px;top:279.1px" width="10" height="10" viewBox="0 0 10 10"><rect x="1.5" y="1.6" width="6.8" height="7.5" fill="none" stroke="#8c8c8c" stroke-width="1"/><path d="M3 5.35 H6.9" stroke="#8c8c8c" stroke-width="1"/><path d="M4.1 4.4 L5.1 5.35 L4.1 6.3 M5.7 4.4 L4.7 5.35 L5.7 6.3" fill="none" stroke="#9a9a9a" stroke-width="0.6"/></svg>
<div class="t" style="left:632px;top:274px;font-size:13px;color:#999;transform:translate(0.594px,0.750px) scaleX(0.9527);">Colin Edwards</div>
<div class="a" style="left:402px;top:297px;width:1px;height:24px;background:#dcdcdc"></div>
<div class="a" style="left:469px;top:297px;width:1px;height:24px;background:#dcdcdc"></div>
<div class="a" style="left:536px;top:297px;width:1px;height:24px;background:#dcdcdc"></div>
<div class="a" style="left:603px;top:297px;width:1px;height:24px;background:#dcdcdc"></div>
<div class="a" style="left:883px;top:297px;width:1px;height:24px;background:#dcdcdc"></div>
<div class="a" style="left:973px;top:297px;width:1px;height:24px;background:#dcdcdc"></div>
<div class="a" style="left:1063px;top:297px;width:1px;height:24px;background:#dcdcdc"></div>
<div class="a" style="left:1153px;top:297px;width:1px;height:24px;background:#dcdcdc"></div>
<div class="a" style="left:1243px;top:297px;width:1px;height:24px;background:#dcdcdc"></div>
<div class="a" style="left:1333px;top:297px;width:1px;height:24px;background:#dcdcdc"></div>
<div class="a" style="left:1423px;top:297px;width:1px;height:24px;background:#dcdcdc"></div>
<div class="a" style="left:1513px;top:297px;width:1px;height:24px;background:#dcdcdc"></div>
<div class="a" style="left:1603px;top:297px;width:1px;height:24px;background:#dcdcdc"></div>
<div class="a" style="left:1693px;top:297px;width:1px;height:24px;background:#dcdcdc"></div>
<div class="a" style="left:373px;top:321px;width:419px;height:1px;background:#dedede"></div>
<div class="a" style="left:794px;top:321px;width:908px;height:1px;background:#dedede"></div>
<div class="t" style="left:421px;top:298px;font-size:13px;color:#999;transform:translate(0.728px,0.750px) scaleX(0.9403);">Opex</div>
<svg class="a" style="left:498px;top:303.1px" width="11" height="10" viewBox="0 0 11 10"><path d="M1.3 1.3 L8.7 8.7 M8.7 1.3 L1.3 8.7" stroke="#8a8a8a" stroke-width="0.9"/></svg>
<div class="t" style="left:557px;top:298px;font-size:13px;color:#999;transform:translate(0.460px,0.750px) scaleX(0.9392);">USD</div>
<svg class="a" style="left:616px;top:303.1px" width="10" height="10" viewBox="0 0 10 10"><rect x="1.5" y="1.6" width="6.8" height="7.5" fill="none" stroke="#8c8c8c" stroke-width="1"/><path d="M3 5.35 H6.9" stroke="#8c8c8c" stroke-width="1"/><path d="M4.1 4.4 L5.1 5.35 L4.1 6.3 M5.7 4.4 L4.7 5.35 L5.7 6.3" fill="none" stroke="#9a9a9a" stroke-width="0.6"/></svg>
<div class="t" style="left:632px;top:298px;font-size:13px;color:#999;transform:translate(0.138px,0.750px) scaleX(0.9647);">Holly Thomson</div>
<div class="t" style="left:843px;top:297px;font-size:14px;color:#a0a0a0;transform:translate(0.396px,0.861px) scaleX(0.9183);">112.5</div>
<div class="t" style="left:957px;top:297px;font-size:14px;color:#a0a0a0;transform:translate(0.329px,0.861px) scaleX(1.0490);">0</div>
<div class="t" style="left:1047px;top:297px;font-size:14px;color:#a0a0a0;transform:translate(0.329px,0.861px) scaleX(1.0490);">0</div>
<div class="t" style="left:1137px;top:297px;font-size:14px;color:#a0a0a0;transform:translate(0.329px,0.861px) scaleX(1.0490);">0</div>
<div class="t" style="left:1198px;top:297px;font-size:14px;color:#a0a0a0;transform:translate(0.613px,0.861px) scaleX(0.9268);">-112.5</div>
<div class="t" style="left:1317px;top:297px;font-size:14px;color:#a0a0a0;transform:translate(0.329px,0.861px) scaleX(1.0490);">0</div>
<div class="t" style="left:1376px;top:297px;font-size:14px;color:#a0a0a0;transform:translate(0.111px,0.861px) scaleX(0.9166);">131.25</div>
<div class="t" style="left:1497px;top:297px;font-size:14px;color:#a0a0a0;transform:translate(0.329px,0.861px) scaleX(1.0490);">0</div>
<div class="t" style="left:1587px;top:297px;font-size:14px;color:#a0a0a0;transform:translate(0.329px,0.861px) scaleX(1.0490);">0</div>
<div class="t" style="left:1677px;top:297px;font-size:14px;color:#a0a0a0;transform:translate(0.329px,0.861px) scaleX(1.0490);">0</div>
<div class="a" style="left:373px;top:326px;width:1329px;height:1px;background:#d9d9d9"></div>
<div class="a" style="left:373px;top:327px;width:1329px;height:3px;background:#c2eee4"></div>
<div class="a" style="left:373px;top:330px;width:419px;height:25px;background:#ededed"></div>
<div class="a" style="left:794px;top:330px;width:908px;height:25px;background:#ededed"></div>
<div class="a" style="left:402px;top:330px;width:1px;height:25px;background:#dcdcdc"></div>
<div class="a" style="left:469px;top:330px;width:1px;height:25px;background:#dcdcdc"></div>
<div class="a" style="left:536px;top:330px;width:1px;height:25px;background:#dcdcdc"></div>
<div class="a" style="left:603px;top:330px;width:1px;height:25px;background:#dcdcdc"></div>
<div class="a" style="left:763px;top:330px;width:1px;height:25px;background:#dcdcdc"></div>
<div class="a" style="left:883px;top:330px;width:1px;height:25px;background:#dcdcdc"></div>
<div class="a" style="left:973px;top:330px;width:1px;height:25px;background:#dcdcdc"></div>
<div class="a" style="left:1063px;top:330px;width:1px;height:25px;background:#dcdcdc"></div>
<div class="a" style="left:1153px;top:330px;width:1px;height:25px;background:#dcdcdc"></div>
<div class="a" style="left:1243px;top:330px;width:1px;height:25px;background:#dcdcdc"></div>
<div class="a" style="left:1333px;top:330px;width:1px;height:25px;background:#dcdcdc"></div>
<div class="a" style="left:1423px;top:330px;width:1px;height:25px;background:#dcdcdc"></div>
<div class="a" style="left:1513px;top:330px;width:1px;height:25px;background:#dcdcdc"></div>
<div class="a" style="left:1603px;top:330px;width:1px;height:25px;background:#dcdcdc"></div>
<div class="a" style="left:1693px;top:330px;width:1px;height:25px;background:#dcdcdc"></div>
<div class="t" style="left:421px;top:334px;font-size:13px;font-weight:bold;color:#222;transform:translate(0.191px,0.450px) scaleX(0.8752);">Type</div>
<div class="t" style="left:479px;top:334px;font-size:13px;font-weight:bold;color:#222;transform:translate(0.646px,0.450px) scaleX(0.9219);">Billable</div>
<div class="t" style="left:542px;top:334px;font-size:13px;font-weight:bold;color:#222;transform:translate(0.415px,0.450px) scaleX(0.8868);">Currency</div>
<div class="t" style="left:625px;top:334px;font-size:13px;font-weight:bold;color:#222;transform:translate(0.866px,0.450px) scaleX(0.8969);">Asset</div>
<svg class="a" style="left:772px;top:340.8px" width="14" height="8" viewBox="0 0 14 8"><path d="M2 1.5 L7 6 L12 1.5" fill="none" stroke="#444" stroke-width="1.1"/></svg>
<div class="t" style="left:867px;top:333px;font-size:14px;font-weight:bold;color:#1a1a1a;transform:translate(0.346px,0.961px) scaleX(1.1052);">0</div>
<div class="t" style="left:957px;top:333px;font-size:14px;font-weight:bold;color:#1a1a1a;transform:translate(0.346px,0.961px) scaleX(1.1052);">0</div>
<div class="t" style="left:1047px;top:333px;font-size:14px;font-weight:bold;color:#1a1a1a;transform:translate(0.346px,0.961px) scaleX(1.1052);">0</div>
<div class="t" style="left:1137px;top:333px;font-size:14px;font-weight:bold;color:#1a1a1a;transform:translate(0.346px,0.961px) scaleX(1.1052);">0</div>
<div class="t" style="left:1227px;top:333px;font-size:14px;font-weight:bold;color:#1a1a1a;transform:translate(0.346px,0.961px) scaleX(1.1052);">0</div>
<div class="t" style="left:1317px;top:333px;font-size:14px;font-weight:bold;color:#1a1a1a;transform:translate(0.346px,0.961px) scaleX(1.1052);">0</div>
<div class="t" style="left:1407px;top:333px;font-size:14px;font-weight:bold;color:#1a1a1a;transform:translate(0.346px,0.961px) scaleX(1.1052);">0</div>
<div class="t" style="left:1497px;top:333px;font-size:14px;font-weight:bold;color:#1a1a1a;transform:translate(0.346px,0.961px) scaleX(1.1052);">0</div>
<div class="t" style="left:1587px;top:333px;font-size:14px;font-weight:bold;color:#1a1a1a;transform:translate(0.346px,0.961px) scaleX(1.1052);">0</div>
<div class="t" style="left:1677px;top:333px;font-size:14px;font-weight:bold;color:#1a1a1a;transform:translate(0.346px,0.961px) scaleX(1.1052);">0</div>
<div class="a" style="left:373px;top:359px;width:1329px;height:1px;background:#d9d9d9"></div>
<div class="a" style="left:373px;top:360px;width:1329px;height:3px;background:#c2eee4"></div>
<div class="a" style="left:373px;top:363px;width:419px;height:25px;background:#ededed"></div>
<div class="a" style="left:794px;top:363px;width:908px;height:25px;background:#ededed"></div>
<div class="a" style="left:402px;top:363px;width:1px;height:25px;background:#dcdcdc"></div>
<div class="a" style="left:472px;top:363px;width:1px;height:25px;background:#dcdcdc"></div>
<div class="a" style="left:532px;top:363px;width:1px;height:25px;background:#dcdcdc"></div>
<div class="a" style="left:603px;top:363px;width:1px;height:25px;background:#dcdcdc"></div>
<div class="a" style="left:763px;top:363px;width:1px;height:25px;background:#dcdcdc"></div>
<div class="a" style="left:883px;top:363px;width:1px;height:25px;background:#dcdcdc"></div>
<div class="a" style="left:973px;top:363px;width:1px;height:25px;background:#dcdcdc"></div>
<div class="a" style="left:1063px;top:363px;width:1px;height:25px;background:#dcdcdc"></div>
<div class="a" style="left:1153px;top:363px;width:1px;height:25px;background:#dcdcdc"></div>
<div class="a" style="left:1243px;top:363px;width:1px;height:25px;background:#dcdcdc"></div>
<div class="a" style="left:1333px;top:363px;width:1px;height:25px;background:#dcdcdc"></div>
<div class="a" style="left:1423px;top:363px;width:1px;height:25px;background:#dcdcdc"></div>
<div class="a" style="left:1513px;top:363px;width:1px;height:25px;background:#dcdcdc"></div>
<div class="a" style="left:1603px;top:363px;width:1px;height:25px;background:#dcdcdc"></div>
<div class="a" style="left:1693px;top:363px;width:1px;height:25px;background:#dcdcdc"></div>
<div class="t" style="left:422px;top:367px;font-size:13px;font-weight:bold;color:#222;transform:translate(0.014px,0.549px) scaleX(0.8913);">Type</div>
<div class="t" style="left:479px;top:367px;font-size:13px;font-weight:bold;color:#222;transform:translate(0.420px,0.549px) scaleX(0.9174);">Billable</div>
<div class="t" style="left:540px;top:367px;font-size:13px;font-weight:bold;color:#222;transform:translate(0.415px,0.549px) scaleX(0.8868);">Currency</div>
<div class="t" style="left:625px;top:367px;font-size:13px;font-weight:bold;color:#222;transform:translate(0.533px,0.549px) scaleX(0.9455);">Non-Labor</div>
<svg class="a" style="left:772px;top:373.9px" width="14" height="8" viewBox="0 0 14 8"><path d="M2 1.5 L7 6 L12 1.5" fill="none" stroke="#444" stroke-width="1.1"/></svg>
<div class="t" style="left:834px;top:367px;font-size:14px;font-weight:bold;color:#1a1a1a;transform:translate(0.184px,0.061px) scaleX(0.9772);">38,500</div>
<div class="t" style="left:924px;top:367px;font-size:14px;font-weight:bold;color:#1a1a1a;transform:translate(0.474px,0.061px) scaleX(0.9704);">49,500</div>
<div class="t" style="left:1047px;top:367px;font-size:14px;font-weight:bold;color:#1a1a1a;transform:translate(0.346px,0.061px) scaleX(1.1052);">0</div>
<div class="t" style="left:1137px;top:367px;font-size:14px;font-weight:bold;color:#1a1a1a;transform:translate(0.346px,0.061px) scaleX(1.1052);">0</div>
<div class="t" style="left:1189px;top:367px;font-size:14px;font-weight:bold;color:#1a1a1a;transform:translate(0.446px,0.061px) scaleX(0.9803);">-38,500</div>
<div class="t" style="left:1279px;top:367px;font-size:14px;font-weight:bold;color:#1a1a1a;transform:translate(0.446px,0.061px) scaleX(0.9803);">-49,500</div>
<div class="t" style="left:1374px;top:367px;font-size:14px;font-weight:bold;color:#1a1a1a;transform:translate(0.184px,0.061px) scaleX(0.9772);">38,500</div>
<div class="t" style="left:1464px;top:367px;font-size:14px;font-weight:bold;color:#1a1a1a;transform:translate(0.474px,0.061px) scaleX(0.9704);">49,500</div>
<div class="t" style="left:1587px;top:367px;font-size:14px;font-weight:bold;color:#1a1a1a;transform:translate(0.346px,0.061px) scaleX(1.1052);">0</div>
<div class="t" style="left:1677px;top:367px;font-size:14px;font-weight:bold;color:#1a1a1a;transform:translate(0.346px,0.061px) scaleX(1.1052);">0</div>
<div class="a" style="left:402px;top:388px;width:1px;height:22.5px;background:#dcdcdc"></div>
<div class="a" style="left:472px;top:388px;width:1px;height:22.5px;background:#dcdcdc"></div>
<div class="a" style="left:532px;top:388px;width:1px;height:22.5px;background:#dcdcdc"></div>
<div class="a" style="left:603px;top:388px;width:1px;height:22.5px;background:#dcdcdc"></div>
<div class="a" style="left:763px;top:388px;width:1px;height:22.5px;background:#dcdcdc"></div>
<div class="a" style="left:883px;top:388px;width:1px;height:22.5px;background:#dcdcdc"></div>
<div class="a" style="left:973px;top:388px;width:1px;height:22.5px;background:#dcdcdc"></div>
<div class="a" style="left:1063px;top:388px;width:1px;height:22.5px;background:#dcdcdc"></div>
<div class="a" style="left:1153px;top:388px;width:1px;height:22.5px;background:#dcdcdc"></div>
<div class="a" style="left:1243px;top:388px;width:1px;height:22.5px;background:#dcdcdc"></div>
<div class="a" style="left:1333px;top:388px;width:1px;height:22.5px;background:#dcdcdc"></div>
<div class="a" style="left:1423px;top:388px;width:1px;height:22.5px;background:#dcdcdc"></div>
<div class="a" style="left:1513px;top:388px;width:1px;height:22.5px;background:#dcdcdc"></div>
<div class="a" style="left:1603px;top:388px;width:1px;height:22.5px;background:#dcdcdc"></div>
<div class="a" style="left:1693px;top:388px;width:1px;height:22.5px;background:#dcdcdc"></div>
<div class="a" style="left:373px;top:410.5px;width:419px;height:1px;background:#dedede"></div>
<div class="a" style="left:794px;top:410.5px;width:908px;height:1px;background:#dedede"></div>
<div class="t" style="left:422px;top:388px;font-size:13px;color:#999;transform:translate(0.951px,0.849px) scaleX(0.9519);">Opex</div>
<svg class="a" style="left:496px;top:392.2px" width="14" height="12" viewBox="0 0 14 12"><path d="M2 6.4 L5.3 9.6 L12 2.6" fill="none" stroke="#2fc82f" stroke-width="1.3"/></svg>
<div class="t" style="left:555px;top:388px;font-size:13px;color:#999;transform:translate(0.056px,0.849px) scaleX(0.9400);">USD</div>
<svg class="a" style="left:616px;top:393.2px" width="10" height="10" viewBox="0 0 10 10"><rect x="1.5" y="1.6" width="6.8" height="7.5" fill="none" stroke="#8c8c8c" stroke-width="1"/><path d="M3 5.35 H6.9" stroke="#8c8c8c" stroke-width="1"/><path d="M4.1 4.4 L5.1 5.35 L4.1 6.3 M5.7 4.4 L4.7 5.35 L5.7 6.3" fill="none" stroke="#9a9a9a" stroke-width="0.6"/></svg>
<div class="t" style="left:632px;top:388px;font-size:13px;color:#999;transform:translate(0.175px,0.849px) scaleX(0.9420);">Financial Tracker</div>
<div class="t" style="left:835px;top:387px;font-size:14px;color:#a0a0a0;transform:translate(0.873px,0.961px) scaleX(0.9231);">38,500</div>
<div class="t" style="left:925px;top:387px;font-size:14px;color:#a0a0a0;transform:translate(0.822px,0.961px) scaleX(0.9278);">49,500</div>
<div class="t" style="left:1047px;top:387px;font-size:14px;color:#a0a0a0;transform:translate(0.329px,0.961px) scaleX(1.0490);">0</div>
<div class="t" style="left:1137px;top:387px;font-size:14px;color:#a0a0a0;transform:translate(0.329px,0.961px) scaleX(1.0490);">0</div>
<div class="t" style="left:1191px;top:387px;font-size:14px;color:#a0a0a0;transform:translate(0.264px,0.961px) scaleX(0.9299);">-38,500</div>
<div class="t" style="left:1281px;top:387px;font-size:14px;color:#a0a0a0;transform:translate(0.264px,0.961px) scaleX(0.9299);">-49,500</div>
<div class="t" style="left:1375px;top:387px;font-size:14px;color:#a0a0a0;transform:translate(0.873px,0.961px) scaleX(0.9231);">38,500</div>
<div class="t" style="left:1465px;top:387px;font-size:14px;color:#a0a0a0;transform:translate(0.822px,0.961px) scaleX(0.9278);">49,500</div>
<div class="t" style="left:1587px;top:387px;font-size:14px;color:#a0a0a0;transform:translate(0.329px,0.961px) scaleX(1.0490);">0</div>
<div class="t" style="left:1677px;top:387px;font-size:14px;color:#a0a0a0;transform:translate(0.329px,0.961px) scaleX(1.0490);">0</div>
</body></html>
